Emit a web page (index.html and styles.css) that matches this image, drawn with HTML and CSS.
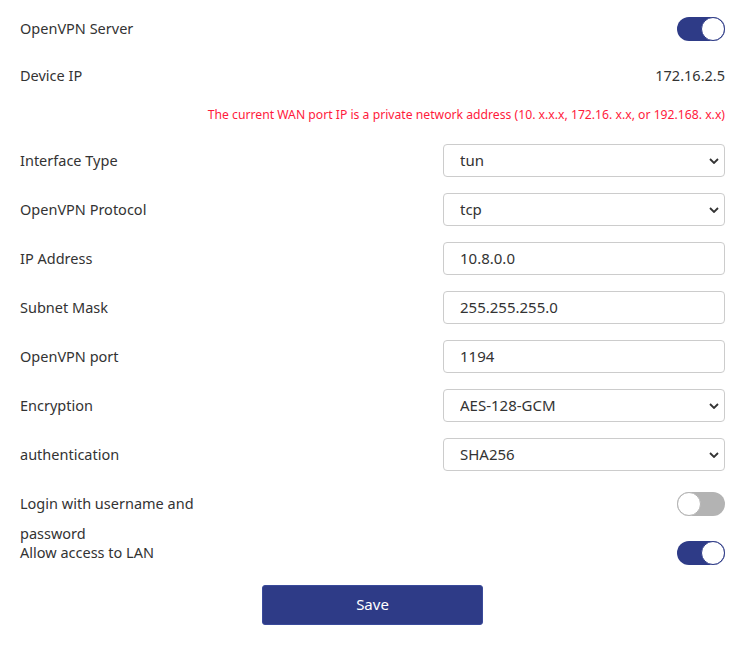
FILE: index.html
```html
<!DOCTYPE html>
<html>
<head>
<meta charset="utf-8">
<link rel="stylesheet" href="styles.css">
</head>
<body>
<form class="form">
  <div class="row row-first">
    <span class="label">OpenVPN Server</span>
    <span class="switch on"><span class="knob"></span></span>
  </div>
  <div class="row">
    <span class="label">Device IP</span>
    <span class="value">172.16.2.5</span>
  </div>
  <div class="warning">The current WAN port IP is a private network address (10. x.x.x, 172.16. x.x, or 192.168. x.x)</div>
  <div class="row">
    <span class="label">Interface Type</span>
    <div class="field"><select class="control"><option>tun</option></select><svg class="chev" viewBox="0 0 10 6"><path d="M1 1l4 4 4-4" fill="none" stroke="#333" stroke-width="1.8"/></svg></div>
  </div>
  <div class="row">
    <span class="label">OpenVPN Protocol</span>
    <div class="field"><select class="control"><option>tcp</option></select><svg class="chev" viewBox="0 0 10 6"><path d="M1 1l4 4 4-4" fill="none" stroke="#333" stroke-width="1.8"/></svg></div>
  </div>
  <div class="row">
    <span class="label">IP Address</span>
    <div class="field"><input class="control" value="10.8.0.0"></div>
  </div>
  <div class="row">
    <span class="label">Subnet Mask</span>
    <div class="field"><input class="control" value="255.255.255.0"></div>
  </div>
  <div class="row">
    <span class="label">OpenVPN port</span>
    <div class="field"><input class="control" value="1194"></div>
  </div>
  <div class="row">
    <span class="label">Encryption</span>
    <div class="field"><select class="control"><option>AES-128-GCM</option></select><svg class="chev" viewBox="0 0 10 6"><path d="M1 1l4 4 4-4" fill="none" stroke="#333" stroke-width="1.8"/></svg></div>
  </div>
  <div class="row">
    <span class="label">authentication</span>
    <div class="field"><select class="control"><option>SHA256</option></select><svg class="chev" viewBox="0 0 10 6"><path d="M1 1l4 4 4-4" fill="none" stroke="#333" stroke-width="1.8"/></svg></div>
  </div>
  <div class="row">
    <span class="label label-wrap">Login with username and password</span>
    <span class="switch"><span class="knob"></span></span>
  </div>
  <div class="row">
    <span class="label">Allow access to LAN</span>
    <span class="switch on"><span class="knob"></span></span>
  </div>
  <div class="actions">
    <button type="button" class="save">Save</button>
  </div>
</form>
</body>
</html>
```
FILE: styles.css
```css
html, body {
  margin: 0;
  padding: 0;
  background: #fff;
}
body {
  font-family: "Noto Sans", "Open Sans", sans-serif;
  font-size: 15px;
  color: #333;
}
.form {
  padding: 12px 30px 0 20px;
}
.row {
  display: flex;
  justify-content: space-between;
  align-items: center;
  height: 33px;
  margin-bottom: 16px;
}
.row-first {
  margin-bottom: 14px;
}
.label {
  font-size: 14.5px;
  line-height: 30px;
  padding-bottom: 1px;
  white-space: nowrap;
}
.label-wrap {
  white-space: normal;
  width: 195px;
  align-self: flex-start;
  padding-top: 1px;
  padding-bottom: 0;
}
.value {
  font-size: 14.5px;
  line-height: 30px;
  padding-bottom: 1px;
}
.warning {
  text-align: right;
  color: #ff1a3c;
  font-size: 12.2px;
  line-height: 16px;
  margin: -1px 0 21px;
}
.field {
  position: relative;
  width: 282px;
  height: 33px;
}
.control {
  box-sizing: border-box;
  width: 100%;
  height: 33px;
  border: 1px solid #ccc;
  border-radius: 4px;
  padding: 0 16px 2px;
  font-family: inherit;
  font-size: 15px;
  color: #333;
  background: #fff;
  -webkit-appearance: none;
  appearance: none;
  outline: none;
}
.chev {
  position: absolute;
  right: 6px;
  top: 14px;
  width: 10px;
  height: 6px;
  pointer-events: none;
}
.switch {
  position: relative;
  box-sizing: border-box;
  width: 48px;
  height: 24px;
  border-radius: 12px;
  background: #b3b3b3;
  flex: none;
}
.switch .knob {
  position: absolute;
  top: 0;
  left: 0;
  box-sizing: border-box;
  width: 24px;
  height: 24px;
  border-radius: 50%;
  background: #fff;
  border: 1px solid #b3b3b3;
}
.switch.on {
  background: #2e3b87;
}
.switch.on .knob {
  left: 24px;
  border-color: #2e3b87;
}
.actions {
  display: flex;
  justify-content: center;
}
.save {
  width: 221px;
  height: 40px;
  border: 1px solid #3a4a9a;
  border-radius: 3px;
  background: #2e3b87;
  color: #fff;
  font-family: inherit;
  font-size: 15px;
  padding-bottom: 3px;
  cursor: pointer;
}
```
